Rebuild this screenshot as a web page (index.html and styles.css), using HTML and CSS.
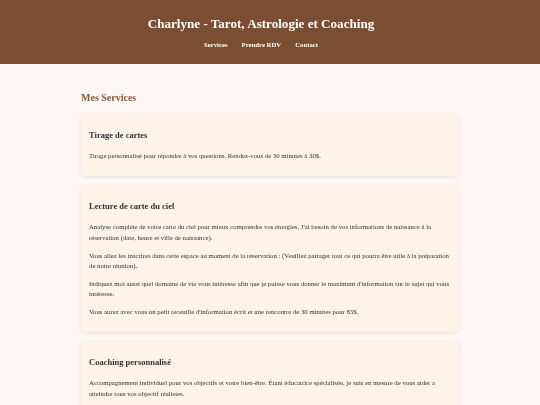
FILE: index.html
```html
<!DOCTYPE html>
<html lang="fr">
<head>
<meta charset="utf-8">
<title>Charlyne - Tarot, Astrologie et Coaching</title>
<link rel="stylesheet" href="styles.css">
</head>
<body>
<header class="site-header">
  <h1 class="site-title">Charlyne - Tarot, Astrologie et Coaching</h1>
  <nav class="nav">
    <a href="#services">Services</a>
    <a href="#rdv">Prendre RDV</a>
    <a href="#contact">Contact</a>
  </nav>
</header>
<main class="container" id="services">
  <h2 class="section-title">Mes Services</h2>
  <section class="card">
    <h3 class="card-title">Tirage de cartes</h3>
    <p>Tirage personnalisé pour répondre à vos questions. Rendez-vous de 30 minutes à 30$.</p>
  </section>
  <section class="card">
    <h3 class="card-title">Lecture de carte du ciel</h3>
    <p>Analyse complète de votre carte du ciel pour mieux comprendre vos énergies. J'ai besoin de vos informations de naissance à la réservation (date, heure et ville de naissance).</p>
    <p>Vous allez les inscrires dans cette espace au moment de la réservation : (Veuillez partager tout ce qui pourra être utile à la préparation de notre réunion).</p>
    <p>Indiquez moi aussi quel domaine de vie vous intéresse afin que je puisse vous donner le maximum d'information sur le sujet qui vous intéresse.</p>
    <p>Vous aurez avec vous un petit receuille d'information écrit et une rencontre de 30 minutes pour 85$.</p>
  </section>
  <section class="card">
    <h3 class="card-title">Coaching personnalisé</h3>
    <p>Accompagnement individuel pour vos objectifs et votre bien-être. Étant éducatrice spécialisée, je suis en mesure de vous aider a atteindre tous vos objectif réalistes.</p>
  </section>
</main>
</body>
</html>
```
FILE: styles.css
```css
html, body {
  margin: 0;
  padding: 0;
}
body {
  background: #fdf8f5;
  color: #333333;
  font-family: "Liberation Serif", "Times New Roman", serif;
  font-size: 6.75px;
  line-height: 1.56;
  will-change: transform;
}
.site-header {
  background: #7b4e31;
  color: #ffffff;
  text-align: center;
  padding: 16px 18px 13px 0;
}
.site-title {
  margin: 0 0 8.5px;
  font-size: 13.1px;
  line-height: 1.2;
  font-weight: bold;
}
.nav {
  display: flex;
  justify-content: center;
  gap: 14px;
  line-height: 1.6;
}
.nav a {
  color: #ffffff;
  text-decoration: none;
  font-weight: bold;
}
.container {
  width: 70%;
  margin: 0 auto;
  padding: 20px 0;
}
.section-title {
  color: #8b5a3c;
  font-size: 10px;
  margin: 7.5px 0 10.5px;
  line-height: 1.2;
}
.card {
  background: #fdf3e7;
  border-radius: 5px;
  box-shadow: 0 1px 4px rgba(0, 0, 0, 0.1);
  padding: 7.5px 8px 7.5px;
  margin-bottom: 9px;
}
.card-title {
  font-size: 8.5px;
  line-height: 1.6;
  margin: 7.5px 0 8.5px;
}
.card p {
  margin: 7.2px 0;
}
```
